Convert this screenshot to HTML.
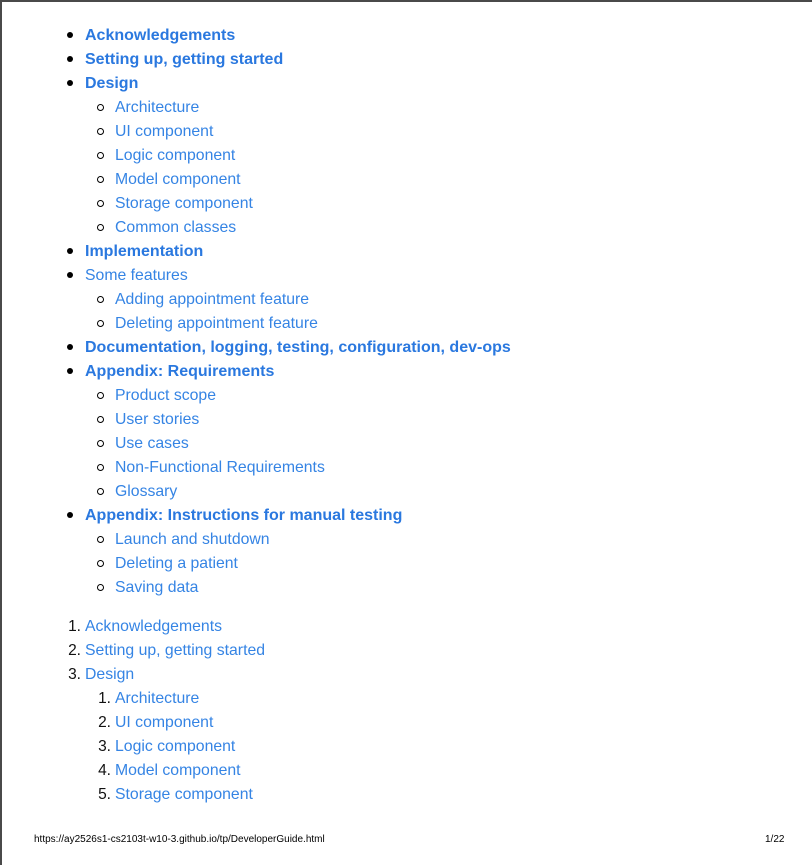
<!DOCTYPE html>
<html><head><meta charset="utf-8"><style>
html,body{margin:0;padding:0;background:#fff;}
body{width:812px;height:865px;position:relative;overflow:hidden;font-family:"Liberation Sans",sans-serif;}
.frame{position:absolute;left:0;top:0;width:810px;height:863px;border-top:2px solid #4a4a4a;border-left:2px solid #4a4a4a;}
.w{position:absolute;left:0;top:4px;width:812px;height:800px;}
.l{position:absolute;font-size:15.8px;line-height:24px;white-space:nowrap;color:#3584e4;}
.b{font-weight:bold;color:#2a78df;font-size:16px;}
.d{position:absolute;width:6px;height:6px;border-radius:50%;background:#000;}
.c{position:absolute;border-radius:50%;border:1.2px solid #000;box-sizing:border-box;width:7px;height:7px;}
.n{position:absolute;font-size:15.5px;line-height:24px;color:#111;text-align:right;}
.f{position:absolute;font-size:10px;color:#000;top:834px;}
</style></head><body>
<div class="frame"></div>
<div class="w">
<div class="d" style="left:67px;top:28px"></div><div class="l b" style="left:85px;top:20px">Acknowledgements</div>
<div class="d" style="left:67px;top:52px"></div><div class="l b" style="left:85px;top:44px">Setting up, getting started</div>
<div class="d" style="left:67px;top:76px"></div><div class="l b" style="left:85px;top:68px">Design</div>
<div class="c" style="left:97px;top:100px"></div><div class="l" style="left:115px;top:92px">Architecture</div>
<div class="c" style="left:97px;top:124px"></div><div class="l" style="left:115px;top:116px">UI component</div>
<div class="c" style="left:97px;top:148px"></div><div class="l" style="left:115px;top:140px">Logic component</div>
<div class="c" style="left:97px;top:172px"></div><div class="l" style="left:115px;top:164px">Model component</div>
<div class="c" style="left:97px;top:196px"></div><div class="l" style="left:115px;top:188px">Storage component</div>
<div class="c" style="left:97px;top:220px"></div><div class="l" style="left:115px;top:212px">Common classes</div>
<div class="d" style="left:67px;top:244px"></div><div class="l b" style="left:85px;top:236px">Implementation</div>
<div class="d" style="left:67px;top:268px"></div><div class="l" style="left:85px;top:260px">Some features</div>
<div class="c" style="left:97px;top:292px"></div><div class="l" style="left:115px;top:284px">Adding appointment feature</div>
<div class="c" style="left:97px;top:316px"></div><div class="l" style="left:115px;top:308px">Deleting appointment feature</div>
<div class="d" style="left:67px;top:340px"></div><div class="l b" style="left:85px;top:332px">Documentation, logging, testing, configuration, dev-ops</div>
<div class="d" style="left:67px;top:364px"></div><div class="l b" style="left:85px;top:356px">Appendix: Requirements</div>
<div class="c" style="left:97px;top:388px"></div><div class="l" style="left:115px;top:380px">Product scope</div>
<div class="c" style="left:97px;top:412px"></div><div class="l" style="left:115px;top:404px">User stories</div>
<div class="c" style="left:97px;top:436px"></div><div class="l" style="left:115px;top:428px">Use cases</div>
<div class="c" style="left:97px;top:460px"></div><div class="l" style="left:115px;top:452px">Non-Functional Requirements</div>
<div class="c" style="left:97px;top:484px"></div><div class="l" style="left:115px;top:476px">Glossary</div>
<div class="d" style="left:67px;top:508px"></div><div class="l b" style="left:85px;top:500px">Appendix: Instructions for manual testing</div>
<div class="c" style="left:97px;top:532px"></div><div class="l" style="left:115px;top:524px">Launch and shutdown</div>
<div class="c" style="left:97px;top:556px"></div><div class="l" style="left:115px;top:548px">Deleting a patient</div>
<div class="c" style="left:97px;top:580px"></div><div class="l" style="left:115px;top:572px">Saving data</div>

<div class="n" style="left:48px;width:33px;top:611px">1.</div><div class="l" style="left:85px;top:611px">Acknowledgements</div>
<div class="n" style="left:48px;width:33px;top:635px">2.</div><div class="l" style="left:85px;top:635px">Setting up, getting started</div>
<div class="n" style="left:48px;width:33px;top:659px">3.</div><div class="l" style="left:85px;top:659px">Design</div>
<div class="n" style="left:78px;width:33px;top:683px">1.</div><div class="l" style="left:115px;top:683px">Architecture</div>
<div class="n" style="left:78px;width:33px;top:707px">2.</div><div class="l" style="left:115px;top:707px">UI component</div>
<div class="n" style="left:78px;width:33px;top:731px">3.</div><div class="l" style="left:115px;top:731px">Logic component</div>
<div class="n" style="left:78px;width:33px;top:755px">4.</div><div class="l" style="left:115px;top:755px">Model component</div>
<div class="n" style="left:78px;width:33px;top:779px">5.</div><div class="l" style="left:115px;top:779px">Storage component</div>
</div>
<div class="f" style="left:34px">https://ay2526s1-cs2103t-w10-3.github.io/tp/DeveloperGuide.html</div>
<div class="f" style="left:765px">1/22</div>
</body></html>
